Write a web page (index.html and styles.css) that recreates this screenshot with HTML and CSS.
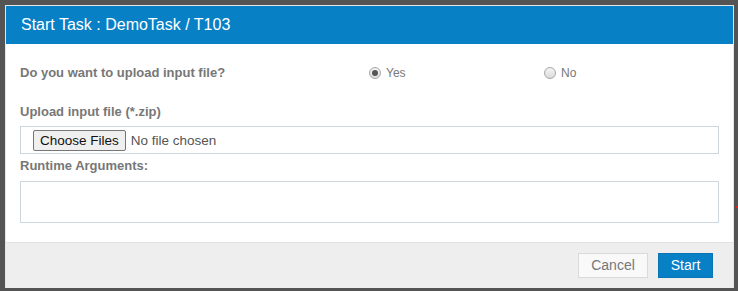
FILE: index.html
```html
<!DOCTYPE html>
<html>
<head>
<meta charset="utf-8">
<link rel="stylesheet" href="styles.css">
</head>
<body>
<div class="dialog">
  <div class="dialog-header">Start Task : DemoTask / T103</div>
  <div class="dialog-body">
    <div class="row-question">
      <div class="label">Do you want to upload input file?</div>
      <label class="radio-opt"><span class="radio checked"></span>Yes</label>
      <label class="radio-opt"><span class="radio"></span>No</label>
    </div>
    <div class="label label-upload">Upload input file (*.zip)</div>
    <div class="file-box">
      <span class="file-btn">Choose Files</span>
      <span class="file-text">No file chosen</span>
    </div>
    <div class="label label-args">Runtime Arguments:</div>
    <div class="textarea"></div>
  </div>
  <div class="dialog-footer">
    <button class="btn btn-cancel">Cancel</button>
    <button class="btn btn-start">Start</button>
  </div>
</div>
<span class="red-dot"></span>
</body>
</html>
```
FILE: styles.css
```css
html, body {
  margin: 0;
  padding: 0;
}
body {
  background: #545454;
  width: 738px;
  height: 291px;
  padding: 5px 0 0 5px;
  box-sizing: border-box;
  font-family: "Liberation Sans", Arial, sans-serif;
  position: relative;
}
.dialog {
  width: 729px;
  height: 283px;
  box-sizing: border-box;
  border: 1px solid #e6e6e6;
  border-bottom: none;
  background: #fff;
  display: flex;
  flex-direction: column;
}
.dialog-header {
  background: #0880c6;
  color: #fff;
  font-size: 16px;
  height: 38px;
  line-height: 38px;
  padding-left: 15px;
  flex: none;
}
.dialog-body {
  padding: 18px 14px 0 14px;
  flex: 1;
}
.label {
  color: #777;
  font-weight: bold;
  font-size: 13px;
}
.row-question {
  display: grid;
  grid-template-columns: 349px 175px 1fr;
  align-items: center;
  height: 20px;
}
.radio-opt {
  display: flex;
  align-items: center;
  color: #777;
  font-size: 12px;
  padding-top: 2px;
}
.radio {
  width: 10px;
  height: 10px;
  border-radius: 50%;
  border: 1px solid #a6a6a6;
  background: linear-gradient(#f4f4f4, #dcdcdc);
  margin-right: 5px;
  position: relative;
  flex: none;
}
.radio.checked::after {
  content: "";
  position: absolute;
  left: 2px;
  top: 2px;
  width: 6px;
  height: 6px;
  border-radius: 50%;
  background: #555;
}
.label-upload {
  margin-top: 22px;
  height: 16px;
  line-height: 16px;
}
.file-box {
  margin-top: 6px;
  height: 28px;
  box-sizing: border-box;
  border: 1px solid #cdd7e0;
  display: flex;
  align-items: center;
  padding-left: 12px;
}
.file-btn {
  box-sizing: border-box;
  height: 21px;
  padding: 0 6px;
  border: 1px solid #767676;
  border-radius: 2px;
  background: #efefef;
  font-size: 13.5px;
  color: #111;
  line-height: 19px;
}
.file-text {
  margin-left: 5px;
  font-size: 13.5px;
  color: #555;
}
.label-args {
  margin-top: 4px;
  height: 16px;
  line-height: 16px;
}
.textarea {
  margin-top: 7px;
  height: 42px;
  box-sizing: border-box;
  border: 1px solid #cdd7e0;
}
.dialog-footer {
  flex: none;
  height: 46px;
  box-sizing: border-box;
  background: #eeeeee;
  border-top: 1px solid #e2e2e2;
  display: flex;
  justify-content: flex-end;
  align-items: flex-start;
  padding: 10px 20px 0 0;
  gap: 10px;
}
.btn {
  height: 25px;
  box-sizing: border-box;
  font-family: "Liberation Sans", Arial, sans-serif;
  font-size: 14px;
  padding: 0;
  border-radius: 0;
  line-height: 23px;
}
.btn-cancel {
  width: 70px;
  background: #f9f9f9;
  border: 1px solid #dadada;
  color: #777;
}
.btn-start {
  width: 55px;
  background: #0880c6;
  border: 1px solid #0a74b4;
  color: #fff;
}
.red-dot {
  position: absolute;
  left: 736px;
  top: 206px;
  width: 2px;
  height: 2px;
  background: #d22;
}
```
